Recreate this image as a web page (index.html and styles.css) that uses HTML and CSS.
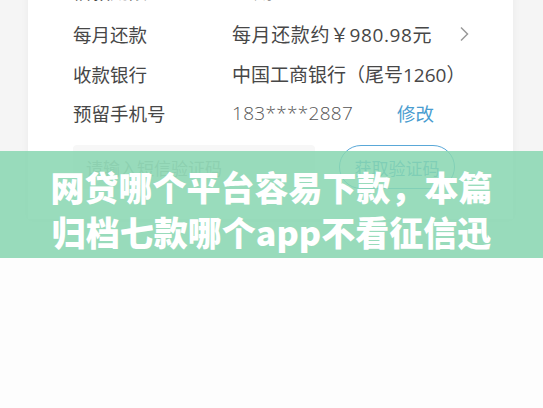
FILE: index.html
```html
<!DOCTYPE html>
<html lang="zh">
<head>
<meta charset="utf-8">
<link rel="stylesheet" href="styles.css">
</head>
<body>
<div class="shot">
  <div class="card">
    <div class="row first"><span class="label">借款期限</span><span class="value">12期</span></div>
    <div class="row"><span class="label">每月还款</span><span class="value amount">每月还款约￥980.98元</span>
      <svg class="chev" width="10" height="16" viewBox="0 0 10 16"><path d="M2 1.5 L8.5 8 L2 14.5" fill="none" stroke="#9a9a9a" stroke-width="1.5"/></svg>
    </div>
    <div class="row"><span class="label">收款银行</span><span class="value">中国工商银行（尾号1260）</span></div>
    <div class="row"><span class="label">预留手机号</span><span class="value phone">183****2887</span><span class="edit">修改</span></div>
    <div class="code-row">
      <div class="input">请输入短信验证码</div>
      <div class="btn">获取验证码</div>
    </div>
  </div>
  <div class="title">网贷哪个平台容易下款，本篇<br>归档七款哪个app不看征信迅</div>
</div>
</body>
</html>
```
FILE: styles.css
```css
html, body {
  margin: 0;
  padding: 0;
  background: #fdfdfd;
  font-family: "Noto Sans CJK SC", "Noto Sans", sans-serif;
}
.shot {
  position: relative;
  height: 258px;
  overflow: hidden;
  background: #f5f5f5;
}
.card {
  margin: -33px 30px 0 28px;
  background: #fff;
  box-shadow: 0 0 8px rgba(0,0,0,0.05);
  padding: 0 0 30px 45px;
}
.row {
  height: 39.5px;
  display: flex;
  align-items: center;
  font-size: 18.5px;
  color: #474747;
}
.row.first {
  height: 47.5px;
}
.label {
  width: 159px;
  flex: none;
}
.value {
  font-family: "Open Sans", "Noto Sans CJK SC", sans-serif;
  font-size: 19px;
  color: #474747;
}
.amount {
  letter-spacing: 0.6px;
}
.phone {
  width: 165px;
  font-weight: 300;
  color: #555;
  letter-spacing: 0.3px;
}
.edit {
  color: #4a9dd0;
}
.chev {
  margin-left: auto;
  margin-right: 44px;
}
.code-row {
  margin-top: 12px;
  display: flex;
  align-items: flex-start;
}
.input {
  width: 242px;
  height: 44px;
  background: #f7f7f7;
  border-radius: 4px;
  padding-left: 13px;
  box-sizing: border-box;
  display: flex;
  align-items: center;
  font-size: 17px;
  color: #a8a8a8;
  margin-right: 24px;
}
.btn {
  width: 116px;
  height: 44px;
  box-sizing: border-box;
  border: 1.5px solid #5aa8d8;
  border-radius: 22px;
  display: flex;
  align-items: center;
  justify-content: center;
  font-size: 17px;
  color: #4a9dd0;
}
.title {
  position: absolute;
  left: 0;
  right: 0;
  top: 151px;
  height: 107px;
  box-sizing: border-box;
  padding-top: 13px;
  background: rgba(136, 214, 177, 0.86);
  color: #fff;
  font-size: 34px;
  font-weight: 900;
  line-height: 45px;
  text-align: center;
  white-space: nowrap;
}
```
